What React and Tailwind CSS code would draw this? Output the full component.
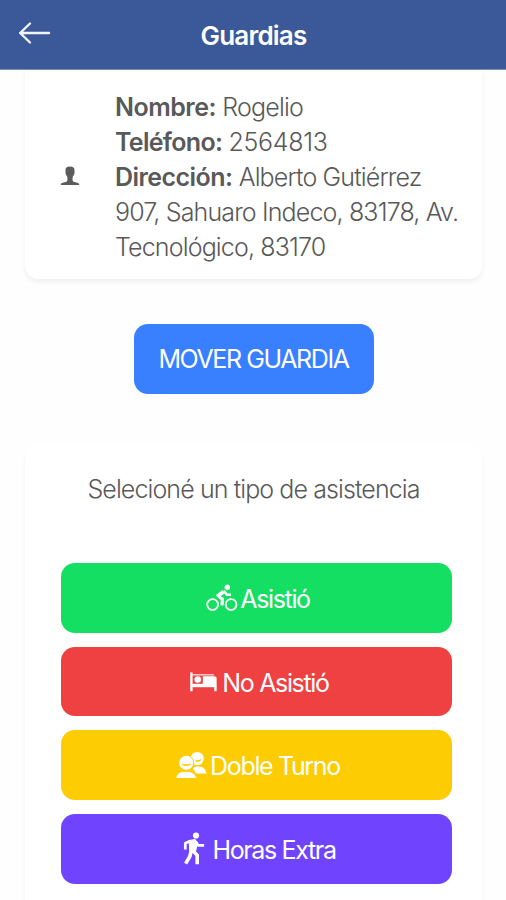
import React from 'react';

const BackIcon = () => (
  <svg width="34" height="24" viewBox="0 0 34 24" fill="none" stroke="#f1f5ff" strokeWidth="2.4" strokeLinecap="round" strokeLinejoin="round">
    <path d="M12 2.500 2.200 12l9.800 9.500M2.200 12H31" />
  </svg>
);

const PersonIcon = () => (
  <svg width="20" height="20" viewBox="0 0 20 20" fill="#5c5c5c">
    <path d="M10 .4c3.400 0 4.500 1.200 4.500 3.600v2.500c0 1.700-.7 2.600-1.500 3.700-.6 1.200-.7 4 0 5 1.200 1.200 5.900 1.300 6.200 2.900v.9H.8v-.9c.3-1.600 5-1.700 6.200-2.900.7-1 .6-3.800 0-5-.8-1.100-1.500-2-1.500-3.700V4C5.500 1.600 6.600.4 10 .4Z" />
  </svg>
);

const BicycleIcon = () => (
  <svg width="32" height="28" viewBox="0 0 32 28" fill="none" stroke="currentColor">
    <circle cx="6.600" cy="20.500" r="5.400" strokeWidth="1.800" />
    <circle cx="25.100" cy="20.500" r="5.400" strokeWidth="1.800" />
    <circle cx="21.300" cy="3.300" r="2.700" fill="currentColor" stroke="none" />
    <path d="M17.500 7.200 11.800 11.400l4.600 3.800-.4 6.200" strokeWidth="3.100" strokeLinejoin="round" />
    <path d="m14.800 10.800 3.700-3.200 2.300 3.200h4.200" strokeWidth="2.500" strokeLinejoin="round" />
  </svg>
);

const BedIcon = () => (
  <svg width="27" height="20" viewBox="0 0 27 20" fill="currentColor">
    <rect x=".2" y=".5" width="2.400" height="18.700" />
    <rect x="2" y="11.800" width="24.500" height="3.400" />
    <rect x="24.200" y="14" width="2.400" height="5.200" />
    <path d="M12.800 4.200h11.400c1.500 0 2.400.9 2.400 2.300V13H12.800Z" />
    <path d="M2.400 2.300h21.500v1.100H2.400Z" />
    <circle cx="7.700" cy="7.500" r="3.300" />
  </svg>
);

const PeopleIcon = () => (
  <svg width="31" height="28" viewBox="0 0 31 28" fill="currentColor">
    <circle cx="21.200" cy="7.500" r="6.600" />
    <path d="M17 17.800c1-1.900 2.700-2.600 5-2.600 4.500 0 7.700 2.700 8.600 7.400H20Z" />
    <g stroke="#fecc02" strokeWidth="1">
      <circle cx="10.300" cy="11.800" r="7.500" />
      <path d="M-.2 27.500c.6-5 4.100-7.300 10.100-7.300s9.900 2.300 10.700 7.300Z" />
    </g>
    <path d="M5.400 12.600c2.900.7 6.900.7 9.800 0-.6 1.500-2.300 2.400-4.900 2.400s-4.300-.9-4.900-2.400ZM19 9.400c2.500 0 4.600-.5 6.500-1.400-.4 1.800-2.400 3-5.500 3Z" fill="#fecc02" />
  </svg>
);

const WalkIcon = () => (
  <svg width="22" height="33" viewBox="0 0 22 33" fill="none" stroke="currentColor" strokeLinejoin="round">
    <circle cx="13" cy="3.500" r="3.100" fill="currentColor" stroke="none" />
    <path d="M6.300 8.500 12 7.500l1.900 5.300-1.400 6.700-5.700-1Z" fill="currentColor" strokeWidth="1.200" />
    <path d="M7.200 9 2.300 11.200V17.500M12.600 9.200l2.600 4.200h5.900" strokeWidth="2.700" />
    <path d="m8.500 17.500-1.700 7-4.200 7.200M9.200 18l5 5.200V32.200" strokeWidth="3.600" />
  </svg>
);

const options = [
  { label: 'Asistió', Icon: BicycleIcon, color: 'bg-[#15df62]', layout: 'gap-[2px] pl-[3px]' },
  { label: 'No Asistió', Icon: BedIcon, color: 'bg-[#ef4141]', layout: 'gap-[5px] pl-[6px]' },
  { label: 'Doble Turno', Icon: PeopleIcon, color: 'bg-[#fecc02]', layout: 'gap-[3px] pl-[3px]' },
  { label: 'Horas Extra', Icon: WalkIcon, color: 'bg-[#7044ff]', layout: 'gap-[7px] pl-[6px]' },
];

const Field = ({ label, spacing, children }) => (
  <p>
    <strong className={`font-semibold ${spacing}`}>{label}:</strong> {children}
  </p>
);

const App = () => {
  return (
    <div className="h-[900px] w-[506px] overflow-hidden bg-[#fefefe] font-['Inter',sans-serif] text-[#595959]">
      <header className="relative z-10 grid h-[70px] grid-cols-[1fr_auto_1fr] items-center border-b border-[#7890bf] bg-[#3b5998] px-[18px]">
        <button aria-label="Volver" className="justify-self-start pb-[3px]">
          <BackIcon />
        </button>
        <h1 className="pt-[2px] pl-px text-[26px] font-semibold tracking-[-0.8px] text-white">Guardias</h1>
      </header>

      <main className="px-[25px]">
        <section className="flex h-[209px] w-[457px] items-center rounded-b-[13px] bg-white pt-[6px] shadow-[0_3px_5px_rgba(0,0,0,0.06)]">
          <div className="flex w-[90px] justify-center pb-[3px]">
            <PersonIcon />
          </div>
          <div className="w-[349px] text-[25px] font-[350] leading-[35px] tracking-[-0.8px]">
            <Field label="Nombre" spacing="tracking-[-0.5px]">Rogelio</Field>
            <Field label="Teléfono" spacing="tracking-[-0.7px]">
              <span className="tracking-[-0.3px]">2564813</span>
            </Field>
            <Field label="Dirección" spacing="tracking-[-0.55px]">
              <span className="tracking-[-0.85px]">
                Alberto Gutiérrez 907, Sahuaro Indeco, 83178, Av. Tecnológico, 83170
              </span>
            </Field>
          </div>
        </section>

        <div className="flex justify-center pt-[45px]">
          <button className="ml-px h-[70px] w-[240px] rounded-[14px] bg-[#3880ff] pt-[2px] text-[25px] tracking-[-1.4px] text-white">
            MOVER GUARDIA
          </button>
        </div>

        <section className="mt-[51px] h-[470px] w-[457px] rounded-t-[13px] bg-white px-[36px] pt-[27px] shadow-[0_5px_5px_rgba(0,0,0,0.05)]">
          <h2 className="whitespace-nowrap text-center text-[25px] font-[350] leading-[35px] tracking-[-0.9px]">
            Selecioné un tipo de asistencia
          </h2>
          <div className="mt-[56px] flex w-[391px] flex-col gap-[14px]">
            {options.map(({ label, Icon, color, layout }) => (
              <button
                key={label}
                className={`flex h-[69.7px] w-full items-center justify-center rounded-[14px] text-[25px] text-white ${color} ${layout}`}
              >
                <Icon />
                <span className="whitespace-nowrap pt-[4px] tracking-[-1.35px]">{label}</span>
              </button>
            ))}
          </div>
        </section>
      </main>
    </div>
  );
};

export default App;
